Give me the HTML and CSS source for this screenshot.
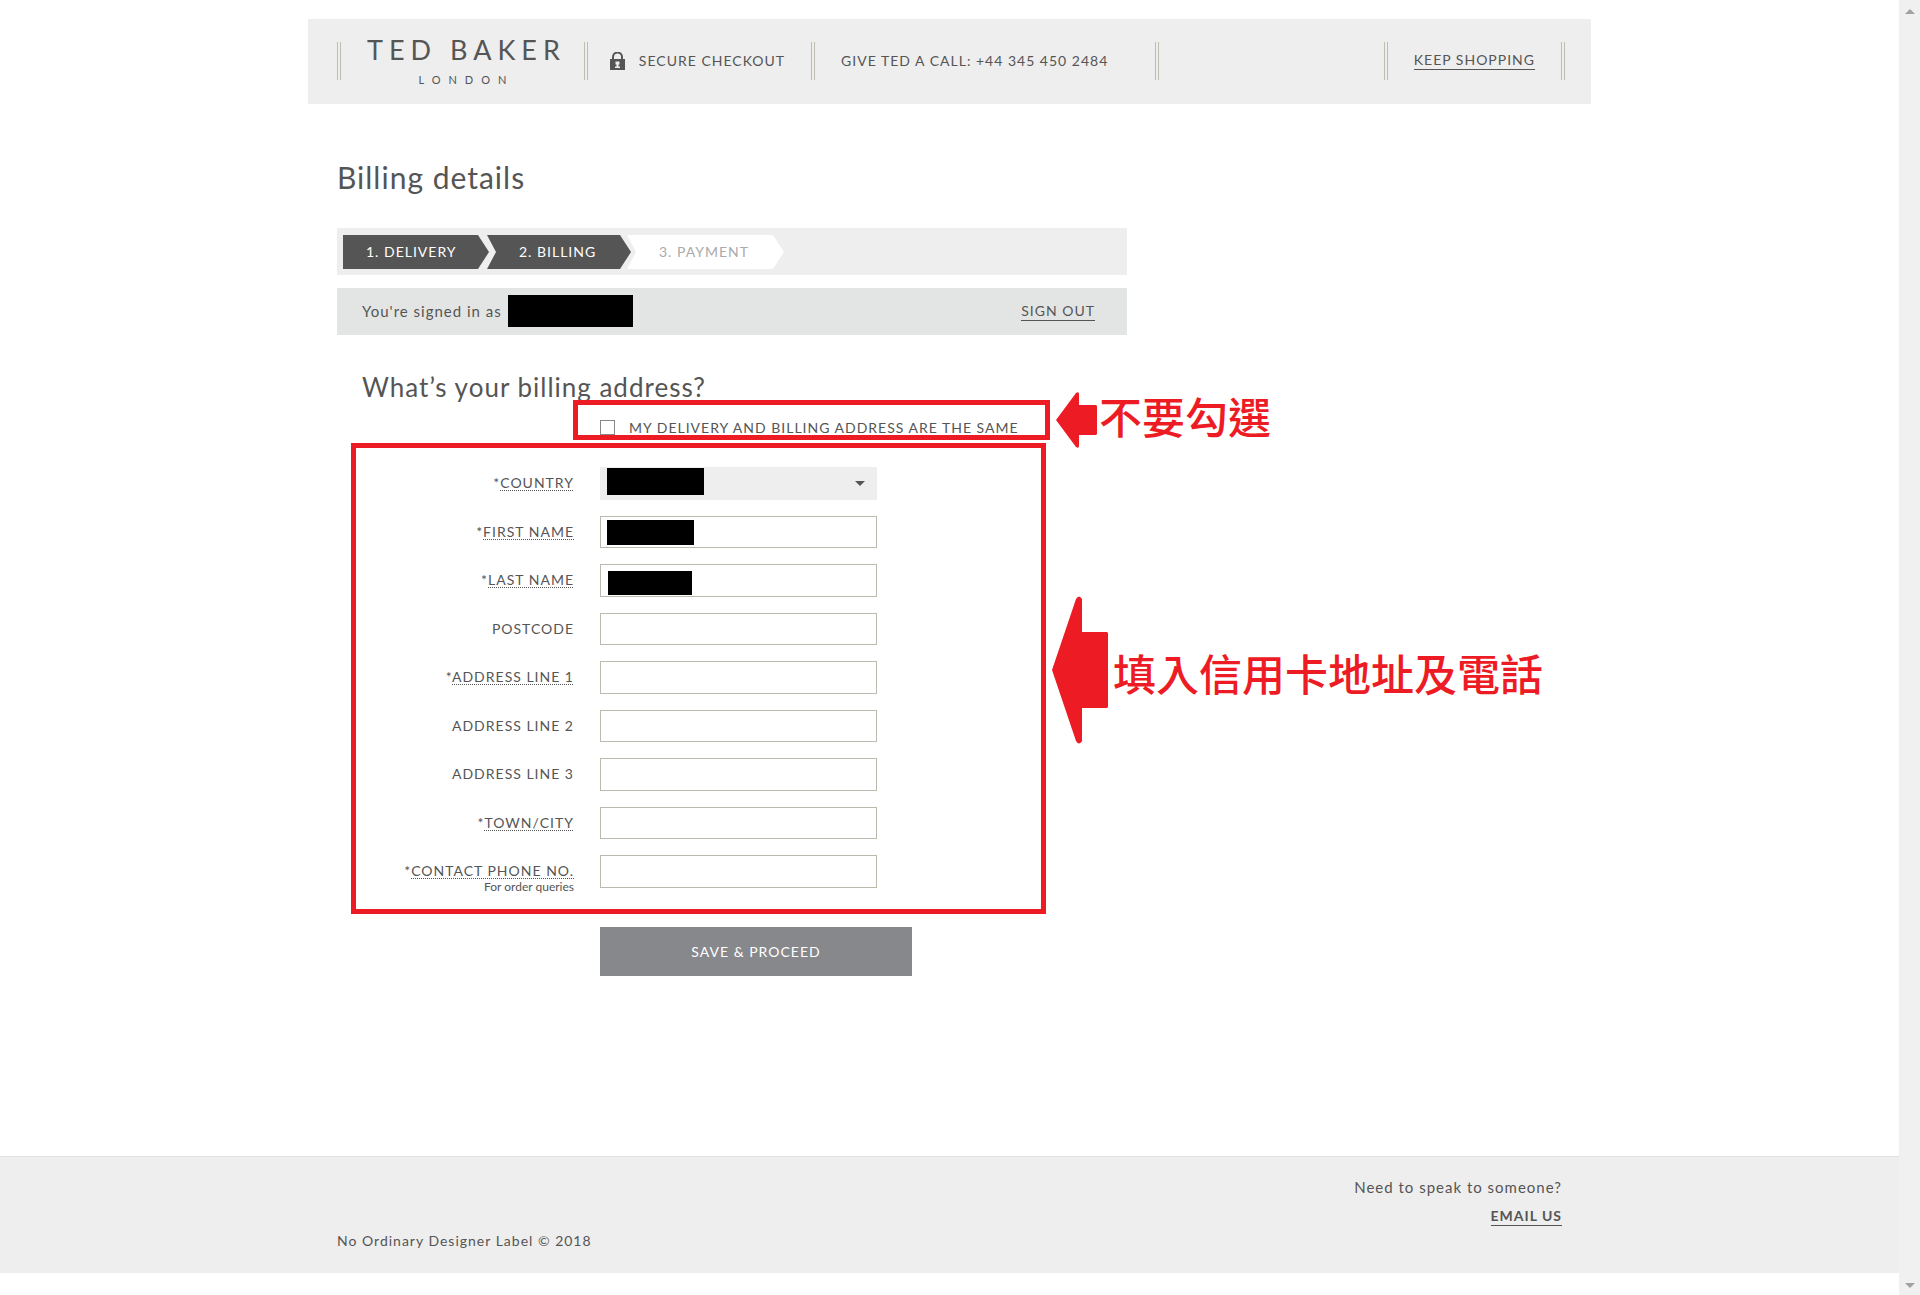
FILE: index.html
```html
<!DOCTYPE html>
<html lang="en">
<head>
    <meta charset="UTF-8">
    <meta name="viewport" content="width=device-width, initial-scale=1.0">
    <title>Billing details</title>
    <link rel="stylesheet" href="styles.css">
</head>
<body>

    <div class="page">
        <header class="header">
            <span class="rule"></span>
            <a class="logo" href="#">
                <span class="logo-name">TED BAKER</span>
                <span class="logo-city">LONDON</span>
            </a>
            <span class="rule"></span>
            <span class="secure">
                <svg class="lock" viewBox="0 0 15 18" aria-hidden="true">
                    <path d="M3 8V5a4.500 4.500 0 0 1 9 0v3" fill="none" stroke="#555" stroke-width="2"/>
                    <path d="M0 7h15v11H0z" fill="#555"/>
                    <path d="M5.500 9.500h4v3h-1v2h1.500v1.500H5v-1.500h1.500v-2h-1z" fill="#eee"/>
                </svg>
                SECURE CHECKOUT
            </span>
            <span class="rule"></span>
            <span class="call">GIVE TED A CALL: +44 345 450 2484</span>
            <span class="rule"></span>
            <span class="rule rule-right"></span>
            <a class="link" href="#">KEEP SHOPPING</a>
            <span class="rule"></span>
        </header>

        <main class="content">
            <h1>Billing details</h1>

            <ol class="steps">
                <li class="step step-first">1. DELIVERY</li>
                <li class="step">2. BILLING</li>
                <li class="step step-next">3. PAYMENT</li>
            </ol>

            <div class="account">
                <span>You're signed in as</span>
                <span class="account-name"></span>
                <a class="link" href="#">SIGN OUT</a>
            </div>

            <form class="billing">
                <h2>What’s your billing address?</h2>

                <div class="same">
                    <input type="checkbox" id="same">
                    <label for="same">MY DELIVERY AND BILLING ADDRESS ARE THE SAME</label>
                    <span class="mark mark-same"></span>
                    <div class="note note-same">
                        <svg class="arrow-small" viewBox="0 0 41 56" aria-hidden="true">
                            <path d="M0 28 20 1q3-2 3 1v11h17l1 1v28l-1 1H23v11q0 3-3 1z" fill="#ed1c24"/>
                        </svg>
                        <span lang="zh-Hant">不要勾選</span>
                    </div>
                </div>

                <div class="fields">
                    <div class="field">
                        <label for="country">*<abbr>COUNTRY</abbr></label>
                        <div class="control select">
                            <select id="country"><option></option></select>
                            <span class="hidden hidden-country"></span>
                        </div>
                    </div>
                    <div class="field">
                        <label for="first">*<abbr>FIRST NAME</abbr></label>
                        <div class="control">
                            <input type="text" id="first">
                            <span class="hidden hidden-first"></span>
                        </div>
                    </div>
                    <div class="field">
                        <label for="last">*<abbr>LAST NAME</abbr></label>
                        <div class="control">
                            <input type="text" id="last">
                            <span class="hidden hidden-last"></span>
                        </div>
                    </div>
                    <div class="field">
                        <label for="postcode">POSTCODE</label>
                        <div class="control"><input type="text" id="postcode"></div>
                    </div>
                    <div class="field">
                        <label for="line1">*<abbr>ADDRESS LINE 1</abbr></label>
                        <div class="control"><input type="text" id="line1"></div>
                    </div>
                    <div class="field">
                        <label for="line2">ADDRESS LINE 2</label>
                        <div class="control"><input type="text" id="line2"></div>
                    </div>
                    <div class="field">
                        <label for="line3">ADDRESS LINE 3</label>
                        <div class="control"><input type="text" id="line3"></div>
                    </div>
                    <div class="field">
                        <label for="town">*<abbr>TOWN/CITY</abbr></label>
                        <div class="control"><input type="text" id="town"></div>
                    </div>
                    <div class="field">
                        <label for="phone">*<abbr>CONTACT PHONE NO.</abbr><small>For order queries</small></label>
                        <div class="control"><input type="tel" id="phone"></div>
                    </div>
                    <span class="mark mark-fields"></span>
                    <div class="note note-fields">
                        <svg class="arrow-large" viewBox="0 0 56 148" aria-hidden="true">
                            <path d="M0 74 24 3q3-5 6 0v33h25l1 1v74l-1 1H30v33q-3 5-6 0z" fill="#ed1c24"/>
                        </svg>
                        <span lang="zh-Hant">填入信用卡地址及電話</span>
                    </div>
                </div>

                <button class="save" type="submit">SAVE &amp; PROCEED</button>
            </form>
        </main>

        <footer class="footer">
            <div class="footer-inner">
                <span class="copyright">No Ordinary Designer Label © 2018</span>
                <div class="contact">
                    <span>Need to speak to someone?</span>
                    <a class="link link-bold" href="#">EMAIL US</a>
                </div>
            </div>
        </footer>
    </div>

    <div class="scrollbar" aria-hidden="true">
        <span class="scroll-up"></span>
        <span class="scroll-down"></span>
    </div>

</body>
</html>
```

FILE: styles.css
```css
/* General Styles */
* {
    box-sizing: border-box;
}

body {
    font-family: Lato, sans-serif;
    font-size: 14px;
    letter-spacing: 1px;
    line-height: 20px;
    color: #555;
    margin: 0;
    background: #fff;
    display: flex;
    min-height: 100vh;
}

.page {
    flex: 1;
    display: flex;
    flex-direction: column;
    padding: 19px 0 22px;
}

.link {
    color: #555;
    text-decoration: none;
    border-bottom: 1px solid #555;
    line-height: 18px;
}

.link-bold {
    font-weight: 700;
}

/* Header */
.header {
    display: flex;
    align-items: center;
    gap: 26px;
    width: 100%;
    max-width: 1283px;
    height: 85px;
    margin: 0 auto;
    padding: 0 26px 2px 29px;
    background: #eee;
}

.rule {
    width: 4px;
    height: 38px;
    border: solid #c0bcb0;
    border-width: 0 1px;
}

.rule-right {
    margin-left: auto;
}

.logo {
    display: flex;
    flex-direction: column;
    align-items: center;
    padding-top: 4px;
    color: #555;
    text-decoration: none;
}

.logo-name {
    font-size: 27px;
    line-height: 34px;
    letter-spacing: 6px;
    margin-right: -8px;
}

.logo-city {
    font-size: 11px;
    line-height: 26px;
    letter-spacing: 8px;
    margin-right: -8px;
}

.secure {
    display: flex;
    align-items: center;
    gap: 14px;
    margin-left: -4px;
}

.call {
    min-width: 288px;
}

.lock {
    width: 15px;
    height: 18px;
}

/* Content */
.content {
    flex: 1;
    width: 100%;
    max-width: 1283px;
    margin: 0 auto;
    padding: 54px 29px 0;
}

h1 {
    font-size: 30px;
    font-weight: 400;
    line-height: 38px;
    margin: 0 0 32px;
}

h2 {
    font-size: 26px;
    font-weight: 400;
    line-height: 32px;
    margin: 0;
}

.steps {
    display: flex;
    max-width: 790px;
    margin: 0 0 13px;
    padding: 7px 6px 6px;
    background: #eee;
    list-style: none;
}

.step {
    height: 34px;
    width: 144px;
    margin-left: -2px;
    padding-left: 32px;
    line-height: 34px;
    color: #fff;
    background: #555;
    clip-path: polygon(0 0, calc(100% - 11px) 0, 100% 50%, calc(100% - 11px) 100%, 0 100%, 9px 50%);
}

.step-first {
    width: 146px;
    margin-left: 0;
    padding-left: 23px;
    clip-path: polygon(0 0, calc(100% - 11px) 0, 100% 50%, calc(100% - 11px) 100%, 0 100%);
}

.step-next {
    width: 157px;
    margin-left: -4px;
    color: #aaa;
    background: #fff;
}

.account {
    display: flex;
    align-items: center;
    max-width: 790px;
    height: 47px;
    padding: 0 32px 1px 25px;
    font-size: 15px;
    background: #e3e5e4;
}

.account-name {
    width: 125px;
    height: 32px;
    margin-left: 6px;
    background: #000;
}

.account .link {
    margin-left: auto;
    font-size: 14px;
}

/* Billing form */
.billing {
    max-width: 790px;
    padding: 36px 0 0 25px;
}

.same {
    position: relative;
    display: flex;
    align-items: center;
    gap: 14px;
    height: 15px;
    margin: 17px 0 32px;
    padding-left: 238px;
    white-space: nowrap;
}

.same input {
    appearance: none;
    width: 15px;
    height: 15px;
    margin: 0;
    border: 1px solid #87888c;
    background: #fff;
}

.fields {
    position: relative;
    display: flex;
    flex-direction: column;
    gap: 16px;
}

.field {
    display: grid;
    grid-template-columns: 212px 277px;
    grid-template-rows: 100%;
    column-gap: 26px;
    height: 33px;
}

.field:nth-child(even) {
    height: 32px;
}

.field label {
    padding-top: 7px;
    line-height: 18px;
    text-align: right;
    white-space: nowrap;
}

.field abbr {
    text-decoration: underline dotted 1px;
    text-decoration-skip-ink: none;
    text-underline-offset: 2px;
}

.field small {
    display: block;
    font-size: 12px;
    line-height: 14px;
    letter-spacing: 0;
}

.control {
    position: relative;
}

.control input,
.control select {
    display: block;
    width: 100%;
    height: 100%;
    padding: 0 8px;
    font: inherit;
    color: #555;
    border: 1px solid #bcbaae;
    border-radius: 0;
    background: #fff;
}

.control select {
    appearance: none;
    border: 0;
    background: #eee;
}

.select::after {
    content: "";
    position: absolute;
    right: 12px;
    top: 14px;
    border: solid transparent;
    border-width: 5px 5px 0;
    border-top-color: #555;
}

.hidden {
    position: absolute;
    left: 7px;
    background: #000;
}

.hidden-country {
    top: 1px;
    width: 97px;
    height: 27px;
}

.hidden-first {
    top: 4px;
    width: 87px;
    height: 25px;
}

.hidden-last {
    top: 7px;
    left: 8px;
    width: 84px;
    height: 24px;
}

.save {
    display: block;
    width: 312px;
    height: 49px;
    margin: 39px 0 0 238px;
    font: inherit;
    letter-spacing: inherit;
    color: #fff;
    border: 0;
    background: #87888c;
    cursor: pointer;
}

/* Red marks and notes over the form */
.mark {
    position: absolute;
    border: 5px solid #ed1c24;
    pointer-events: none;
}

.mark-same {
    left: 211px;
    top: -20px;
    width: 477px;
    height: 40px;
}

.mark-fields {
    left: -11px;
    top: -24px;
    bottom: -26px;
    width: 695px;
}

.note {
    position: absolute;
    display: flex;
    font-family: "Noto Sans CJK TC", sans-serif;
    font-size: 43px;
    font-weight: 500;
    letter-spacing: 0;
    color: #ed1c24;
    white-space: nowrap;
}

.note-same {
    left: 694px;
    top: -28px;
    gap: 2px;
    line-height: 46px;
}

.note-fields {
    left: 690px;
    top: 129px;
    gap: 5px;
    line-height: 152px;
}

.arrow-small {
    width: 41px;
    height: 56px;
}

.arrow-large {
    width: 56px;
    height: 148px;
}

/* Footer */
.footer {
    border-top: 1px solid #e1e3e2;
    background: #eee;
}

.footer-inner {
    display: flex;
    justify-content: space-between;
    width: 100%;
    max-width: 1283px;
    height: 116px;
    margin: 0 auto;
    padding: 20px 29px 22px;
}

.copyright {
    align-self: flex-end;
}

.contact {
    display: flex;
    flex-direction: column;
    align-items: flex-end;
    gap: 10px;
    font-size: 15px;
}

.contact .link {
    font-size: 14px;
}

/* Scrollbar */
.scrollbar {
    display: flex;
    flex-direction: column;
    justify-content: space-between;
    align-items: center;
    width: 21px;
    padding: 9px 0 7px;
    background: #f0f0f0;
}

.scroll-up,
.scroll-down {
    border: solid transparent;
}

.scroll-up {
    border-width: 0 5px 5px;
    border-bottom-color: #a0a0a0;
}

.scroll-down {
    border-width: 5px 5px 0;
    border-top-color: #a0a0a0;
}
```
